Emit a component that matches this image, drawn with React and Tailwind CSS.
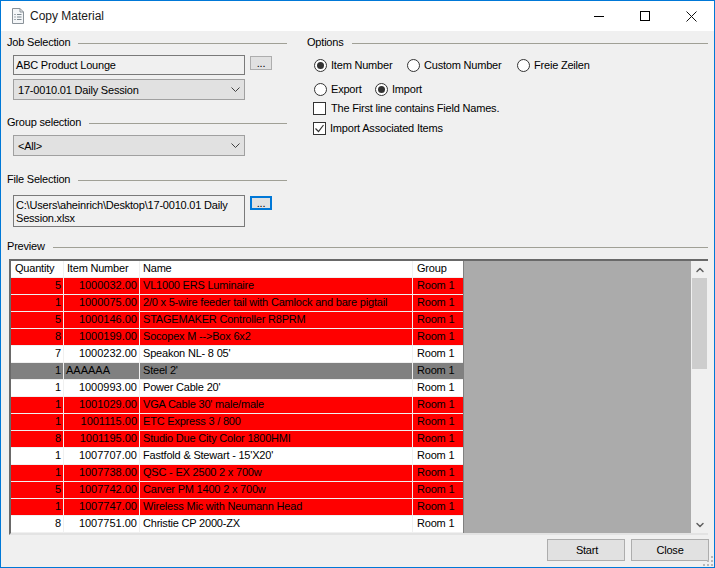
import { ChevronDown, ChevronUp } from 'lucide-react'

const rows = [
  ['5', '1000032.00', 'VL1000 ERS Luminaire', 'red'],
  ['1', '1000075.00', '2/0 x 5-wire feeder tail with Camlock and bare pigtail', 'red'],
  ['5', '1000146.00', 'STAGEMAKER Controller R8PRM', 'red'],
  ['8', '1000199.00', 'Socopex M -->Box 6x2', 'red'],
  ['7', '1000232.00', "Speakon NL- 8 05'", 'white'],
  ['1', 'AAAAAA', "Steel 2'", 'gray'],
  ['1', '1000993.00', "Power Cable 20'", 'white'],
  ['1', '1001029.00', "VGA Cable 30' male/male", 'red'],
  ['1', '1001115.00', 'ETC Express 3 / 800', 'red'],
  ['8', '1001195.00', 'Studio Due City Color 1800HMI', 'red'],
  ['1', '1007707.00', "Fastfold & Stewart - 15'X20'", 'white'],
  ['1', '1007738.00', 'QSC - EX 2500 2 x 700w', 'red'],
  ['5', '1007742.00', 'Carver PM 1400 2 x 700w', 'red'],
  ['1', '1007747.00', 'Wireless Mic with Neumann Head', 'red'],
  ['8', '1007751.00', 'Christie CP 2000-ZX', 'white'],
]

const rowBg = { red: 'bg-[#ff0000]', white: 'bg-white', gray: 'bg-[#808080]' }

function GroupTitle({ children, className = '' }) {
  return (
    <div className={`flex items-center gap-2 h-[14px] ${className}`}>
      <span className="whitespace-nowrap pb-[2px]">{children}</span>
      <div className="flex-1 h-px bg-[#a0a096]" />
    </div>
  )
}

function Combo({ children }) {
  return (
    <div className="w-[232px] h-[21px] border border-[#a0a0a0] bg-[#e1e1e1] flex items-center justify-between pl-[4px] pr-[4px]">
      <span>{children}</span>
      <svg width="9" height="6" viewBox="0 0 9 6" fill="none" stroke="#404040">
        <path d="M.5 .5l4 4 4-4" />
      </svg>
    </div>
  )
}

function Radio({ label, checked, className = '' }) {
  return (
    <div className={`flex items-center gap-[4px] ${className}`}>
      <div className="w-[13px] h-[13px] rounded-full border border-[#333] bg-white flex items-center justify-center">
        {checked && <div className="w-[7px] h-[7px] rounded-full bg-[#333]" />}
      </div>
      <span className="whitespace-nowrap">{label}</span>
    </div>
  )
}

function Cell({ className = '', children }) {
  return <div className={`h-[16px] leading-[14px] overflow-hidden whitespace-nowrap ${className}`}>{children}</div>
}

export default function App() {
  return (
    <div className="relative w-[715px] h-[568px] bg-[#f0f0f0] border border-[#0078d7] text-[11px] tracking-[-0.2px] leading-[14px] text-black flex flex-col overflow-hidden font-['Liberation_Sans',Arial,sans-serif]">
      {/* Title bar */}
      <div className="h-[30px] bg-white flex items-center shrink-0">
        <svg width="14" height="16" viewBox="0 0 14 16" className="ml-[10px]" fill="none">
          <path d="M1.5 .5H9L12.5 4V15.5H1.5Z" fill="#f4f6f8" stroke="#8a9299" />
          <path d="M9 .5V4H12.5" stroke="#8a9299" />
          <path d="M3.5 6.5h1M3.5 9h1M3.5 11.5h1" stroke="#5a6670" />
          <path d="M6 6.5h4.5M6 9h4.5M6 11.5h4.5" stroke="#7d8890" />
        </svg>
        <span className="ml-[5px] text-[12px] tracking-normal text-[#1a1a1a]">Copy Material</span>
        <div className="ml-auto flex items-center">
          <div className="w-[46px] flex justify-center">
            <div className="w-[10px] h-px bg-black" />
          </div>
          <div className="w-[46px] flex justify-center">
            <div className="w-[10px] h-[10px] border border-black" />
          </div>
          <div className="w-[46px] flex justify-center">
            <svg width="11" height="11" viewBox="0 0 11 11" stroke="#111" fill="none">
              <path d="M.5 .5l10 10M10.5 .5l-10 10" />
            </svg>
          </div>
        </div>
      </div>

      {/* Upper panes */}
      <div className="flex px-[6px] pt-[5px] h-[209px] shrink-0">
        <div className="w-[280px] shrink-0">
          <GroupTitle>Job Selection</GroupTitle>
          <div className="flex items-start gap-[5px] mt-[5px] ml-[6px]">
            <div className="w-[232px] h-[20px] border border-[#7a7a7a] bg-[#f0f0f0] flex items-center pl-[2px]">ABC Product Lounge</div>
            <div className="w-[22px] h-[14px] mt-[1px] border border-[#adadad] bg-[#e1e1e1] flex items-center justify-center leading-none">...</div>
          </div>
          <div className="mt-[4px] ml-[6px]"><Combo>17-0010.01 Daily Session</Combo></div>
          <GroupTitle className="mt-[16px]">Group selection</GroupTitle>
          <div className="mt-[5px] ml-[6px]"><Combo>&lt;All&gt;</Combo></div>
          <GroupTitle className="mt-[17px]">File Selection</GroupTitle>
          <div className="flex items-start gap-[5px] mt-[8px] ml-[6px]">
            <div className="w-[232px] h-[32px] border border-[#7a7a7a] bg-[#f0f0f0] pl-[2px] pt-[3px] leading-[13px]">C:\Users\aheinrich\Desktop\17-0010.01 Daily Session.xlsx</div>
            <div className="w-[22px] h-[14px] mt-[1px] border-2 border-[#0078d7] bg-[#e1e1e1] flex items-center justify-center leading-none">...</div>
          </div>
        </div>
        <div className="flex-1 ml-[20px]">
          <GroupTitle>Options</GroupTitle>
          <div className="flex items-center mt-[8px] ml-[7px] h-[14px]">
            <Radio label="Item Number" checked className="w-[93px]" />
            <Radio label="Custom Number" className="w-[110px]" />
            <Radio label="Freie Zeilen" />
          </div>
          <div className="flex items-center mt-[10px] ml-[7px] h-[14px]">
            <Radio label="Export" className="w-[61px]" />
            <Radio label="Import" checked />
          </div>
          <div className="flex items-center gap-[5px] mt-[5px] ml-[6px] h-[14px]">
            <div className="w-[13px] h-[13px] border border-[#333] bg-white" />
            <span>The First line contains Field Names.</span>
          </div>
          <div className="flex items-center gap-[4px] mt-[6px] ml-[6px] h-[14px]">
            <div className="w-[13px] h-[13px] border border-[#333] bg-white flex items-center justify-center">
              <svg width="11" height="11" viewBox="0 0 11 11" fill="none" stroke="#333" strokeWidth="1.2">
                <path d="M1.5 5.5l3 3 5-6.5" />
              </svg>
            </div>
            <span>Import Associated Items</span>
          </div>
        </div>
      </div>

      {/* Preview */}
      <div className="px-[6px] shrink-0">
        <GroupTitle>Preview</GroupTitle>
      </div>
      <div className="mt-[5px] ml-[8px] mr-[6px] h-[276px] border-t-2 border-l-2 border-t-[#696969] border-l-[#696969] border-b-2 border-b-[#e3e3e3] flex shrink-0">
        <div className="flex-1 bg-[#ababab] overflow-hidden min-w-0">
          <div className="w-[453px] bg-[#f0f0f0] border-r border-[#808080] flex flex-col gap-px pb-px">
            <div className="flex gap-px">
              <Cell className="w-[52px] bg-white pl-[4px]">Quantity</Cell>
              <Cell className="w-[75px] bg-white pl-[3px]">Item Number</Cell>
              <Cell className="w-[272px] bg-white pl-[3px]">Name</Cell>
              <Cell className="w-[50px] bg-white pl-[4px]">Group</Cell>
            </div>
            {rows.map((row) => (
              <div key={row[1]} className="flex gap-px">
                <Cell className={`w-[52px] text-right pr-[2px] tracking-normal ${rowBg[row[3]]}`}>{row[0]}</Cell>
                <Cell className={`w-[75px] pr-[2px] tracking-normal ${row[3] === 'gray' ? 'text-left pl-[2px]' : 'text-right'} ${rowBg[row[3]]}`}>{row[1]}</Cell>
                <Cell className={`w-[272px] pl-[3px] ${rowBg[row[3]]}`}>{row[2]}</Cell>
                <Cell className={`w-[50px] pl-[4px] ${rowBg[row[3]]}`}>Room 1</Cell>
              </div>
            ))}
          </div>
        </div>
        <div className="w-[17px] bg-[#f0f0f0] flex flex-col shrink-0">
          <div className="h-[17px] flex items-center justify-center"><ChevronUp size={12} strokeWidth={3} className="text-[#606060]" /></div>
          <div className="flex-1 px-px">
            <div className="h-[91px] bg-[#cdcdcd]" />
          </div>
          <div className="h-[17px] flex items-center justify-center"><ChevronDown size={12} strokeWidth={3} className="text-[#606060]" /></div>
        </div>
      </div>

      {/* Footer */}
      <div className="flex justify-end gap-[6px] pr-[5px] mt-[4px]">
        <div className="w-[78px] h-[22px] border border-[#adadad] bg-[#e1e1e1] flex items-center justify-center pl-[2px]">Start</div>
        <div className="w-[78px] h-[22px] border border-[#adadad] bg-[#e1e1e1] flex items-center justify-center">Close</div>
      </div>

      {/* Size grip */}
      <svg width="10" height="10" viewBox="0 0 10 10" fill="#b8b8b8" className="absolute right-px bottom-px">
        <path d="M8 0h2v2H8zM4 4h2v2H4zM8 4h2v2H8zM0 8h2v2H0zM4 8h2v2H4zM8 8h2v2H8z" />
      </svg>
    </div>
  )
}
